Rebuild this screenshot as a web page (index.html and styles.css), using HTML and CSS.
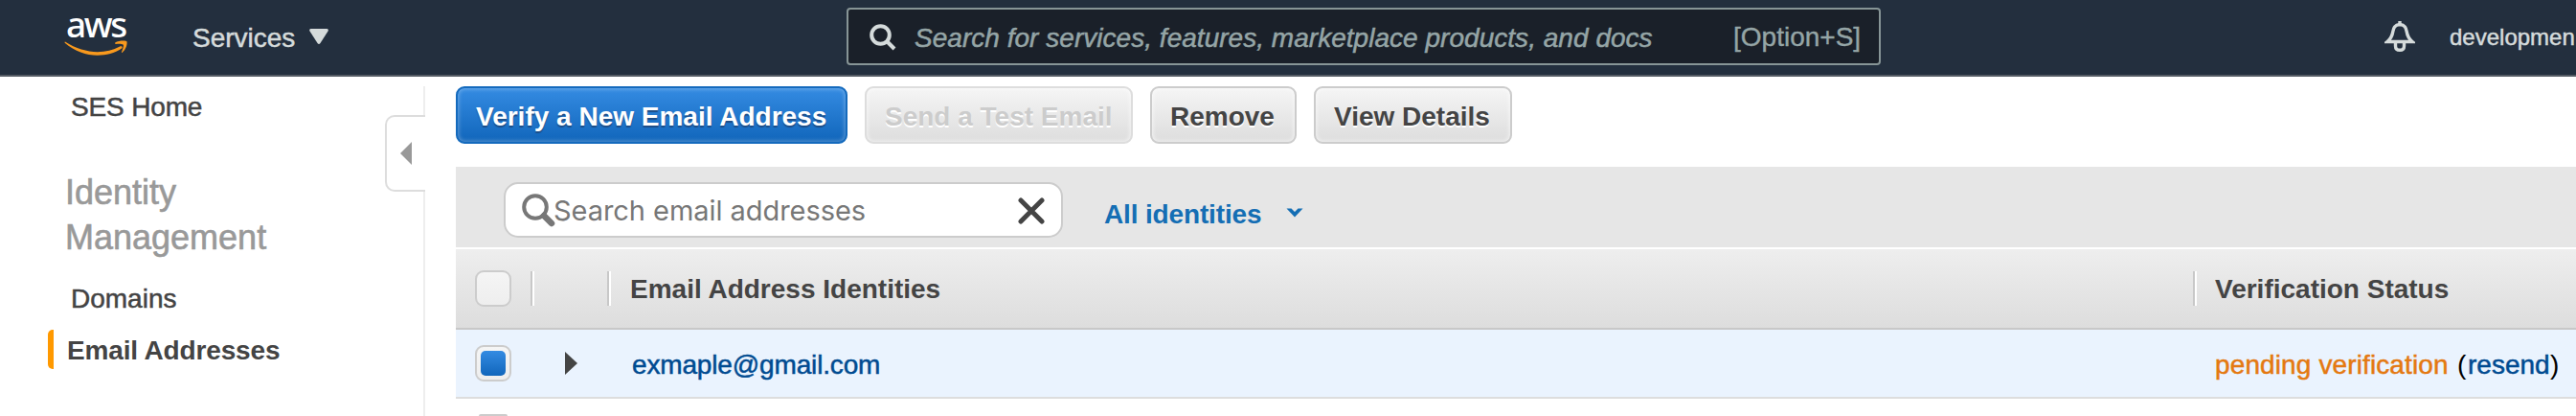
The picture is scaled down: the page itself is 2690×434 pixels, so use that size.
FILE: index.html
```html
<!DOCTYPE html>
<html lang="en">
<head>
<meta charset="utf-8">
<title>SES Management Console</title>
<link rel="stylesheet" href="styles.css">
</head>
<body>
<header class="topbar">
  <div class="logo">
    <span class="logo-text">aws</span>
    <svg class="logo-smile" width="67" height="18" viewBox="0 0 68 18"><path d="M1 1.5C21 14.500 43 15 59 6.500C61 5.500 62.500 7 61 8.500C44 19.500 19 18.500 1 3Q0 1.500 1 1.500Z" fill="#f8991d"/><path d="M54 2.500C58 0 66 0 66.500 1.500C67 4 65.500 10 61.500 13C61 13 60.800 12.500 61 12C62.500 8 63.500 5.500 62.500 4.500C61.500 3.500 58 3.500 54.500 3.800Q53.500 3.500 54 2.500Z" fill="#f8991d"/></svg>
  </div>
  <div class="services">Services</div>
  <svg class="services-caret" width="20" height="17" viewBox="0 0 20 17"><path d="M1.500 0H18.500Q20.500 .5 19.500 2.500L11.500 15Q10 17 8.500 15L.5 2.500Q-.5 .5 1.500 0Z" fill="#d5dbdb"/></svg>
  <div class="global-search">
    <svg class="global-search-icon" width="28" height="28" viewBox="0 0 28 28" fill="none" stroke="#d5dbdb" stroke-width="4"><circle cx="11.500" cy="11.500" r="9.300"/><path d="M18 18L26 26"/></svg>
    <span class="global-search-hint">Search for services, features, marketplace products, and docs</span>
    <span class="global-search-key">[Option+S]</span>
  </div>
  <svg class="bell" width="32" height="32" viewBox="0 0 32 32" fill="none" stroke="#d5dbdb" stroke-width="3.400"><path d="M16 3.500C10.500 4 9.500 7 8.800 11C8.200 15 7 18 3 21.500H29C25 18 23.800 15 23.200 11C22.500 7 21.500 4 16 3.500Z" stroke-linejoin="miter"/><path d="M11.500 22.500V26Q11.500 30.300 16 30.300T20.500 26V22.500M16 0V3"/></svg>
  <div class="account">developmen</div>
</header>
<div class="page">
  <nav class="sidebar">
    <div class="nav-item nav-home">SES Home</div>
    <div class="nav-heading">Identity Management</div>
    <div class="nav-item nav-domains">Domains</div>
    <div class="nav-item nav-current"><span class="nav-marker"></span><span class="nav-current-text">Email Addresses</span></div>
  </nav>
  <div class="divider">
    <div class="divider-line line-top"></div>
    <div class="collapse-tab"><svg width="12" height="24" viewBox="0 0 12 24"><path d="M12 0V24L0 12Z" fill="#999"/></svg></div>
    <div class="divider-line line-rest"></div>
  </div>
  <main class="content">
    <div class="actions">
      <div class="btn btn-primary">Verify a New Email Address</div>
      <div class="btn btn-disabled">Send a Test Email</div>
      <div class="btn btn-remove">Remove</div>
      <div class="btn btn-view">View Details</div>
    </div>
    <div class="filter">
      <div class="field">
        <svg class="field-icon" width="36" height="36" viewBox="0 0 36 36" fill="none" stroke="#777"><circle cx="14" cy="14" r="11.800" stroke-width="4"/><path d="M23 23L31 31" stroke-width="6.500" stroke-linecap="round"/></svg>
        <span class="field-text">Search email addresses</span>
        <svg class="field-clear" width="28" height="28" viewBox="0 0 28 28"><path d="M3 3L25 25M25 3L3 25" stroke="#444" stroke-width="5" stroke-linecap="round"/></svg>
      </div>
      <span class="scope">All identities</span>
      <svg class="scope-caret" width="20" height="12" viewBox="0 0 20 12"><path d="M1.500 1.500H6.500L10 5L13.500 1.500H18.500L10 10.500Z" fill="#146eb4"/></svg>
    </div>
    <div class="row row-head">
      <div class="c-check"><span class="checkbox"></span></div>
      <div class="c-expand sep"></div>
      <div class="c-name sep">Email Address Identities</div>
      <div class="c-status sep">Verification Status</div>
    </div>
    <div class="row row-selected">
      <div class="c-check"><span class="checkbox"><span class="checked"></span></span></div>
      <div class="c-expand"><svg class="expander" width="13" height="24" viewBox="0 0 13 24"><path d="M0 0V24L13 12Z" fill="#444"/></svg></div>
      <div class="c-name"><span class="t-email">exmaple@gmail.com</span></div>
      <div class="c-status"><span class="t-pending">pending verification</span><span class="paren paren-open">(</span><span class="t-resend">resend</span><span class="paren">)</span></div>
    </div>
    <div class="row row-next">
      <div class="c-check"><span class="checkbox-top"></span></div>
    </div>
  </main>
</div>
</body>
</html>
```
FILE: styles.css
```css
* { box-sizing: border-box; }
html, body { margin: 0; height: 434px; overflow: hidden; }
body { width: 2690px; background: #fff; color: #444; font: 28px/32px "Liberation Sans", Arial, sans-serif; white-space: nowrap; }
svg { display: block; flex: none; }

.topbar { display: flex; align-items: flex-start; height: 80px; background: #232f3e; border-bottom: 2px solid #545b64; color: #d5dbdb; overflow: hidden; }
.logo { flex: none; width: 70px; margin-left: 67px; padding-top: 8px; height: 78px; }
.logo-text { display: block; height: 34px; padding-left: 2px; font: 500 37px/34px "Noto Sans", "Open Sans", sans-serif; letter-spacing: -2.4px; color: #fff; }
.services { flex: none; width: 122px; margin: 24px 0 0 64px; -webkit-text-stroke: .5px; }
.services-caret { margin-top: 30px; }
.global-search { flex: none; display: flex; width: 1080px; height: 60px; margin: 8px 0 0 541px; border: 2px solid #879596; border-radius: 4px; background: #1a2029; color: #95a5a6; }
.global-search-icon { margin: 15px 0 0 22px; }
.global-search-hint { width: 855px; margin: 14px 0 0 19px; font-style: italic; -webkit-text-stroke: .5px; letter-spacing: .03px; }
.global-search-key { margin-top: 13px; -webkit-text-stroke: .4px; }
.bell { margin: 22px 0 0 526px; }
.account { margin: 23px 0 0 36px; font-size: 24px; -webkit-text-stroke: .5px; }

.page { display: flex; height: 354px; overflow: hidden; }
.sidebar { width: 402px; flex: none; padding-top: 16px; }
.nav-item { height: 32px; -webkit-text-stroke: .5px; letter-spacing: -.15px; }
.nav-home { padding-left: 74px; }
.nav-heading { width: 330px; margin-top: 49px; padding-left: 68px; font-size: 36px; line-height: 47px; color: #999; white-space: normal; -webkit-text-stroke: .6px; }
.nav-domains { margin-top: 25px; padding-left: 74px; letter-spacing: 0; }
.nav-current { display: flex; height: 41px; margin-top: 16px; padding-left: 50px; font-weight: bold; -webkit-text-stroke: 0; }
.nav-marker { width: 6px; height: 41px; border-radius: 5px 0 0 5px; background: #f90; }
.nav-current-text { margin: 6px 0 0 14px; }

.divider { width: 42px; flex: none; padding-top: 10px; }
.divider-line { width: 2px; margin-left: 40px; background: #eee; }
.line-top { height: 30px; }
.line-rest { height: 234px; }
.collapse-tab { display: flex; align-items: center; height: 80px; padding-left: 14px; border: 2px solid #ddd; border-right: 0; border-radius: 10px 0 0 10px; }

.content { width: 2214px; margin-left: 32px; padding-top: 10px; }
.actions { display: flex; gap: 18px; height: 84px; }
.btn { height: 60px; padding: 14px 0 0 19px; border: 2px solid #ccc; border-radius: 9px; background: linear-gradient(#f5f5f5, #ddd); box-shadow: inset 0 0 4px 1px rgba(255,255,255,.6); font-weight: bold; text-shadow: 0 2px 0 #fff; }
.btn-primary { width: 409px; border-color: #146abd; background: linear-gradient(#348be2, #1166bb); box-shadow: inset 0 0 4px 1px rgba(255,255,255,.3); color: #fff; text-shadow: 0 2px 1px #1d4d87; }
.btn-disabled { width: 280px; border-color: #ddd; color: #ccc; }
.btn-remove { width: 153px; }
.btn-view { width: 207px; }

.filter { display: flex; height: 86px; padding: 16px 0 0 50px; background: #e6e6e6; border-bottom: 2px solid #fff; }
.field { display: flex; width: 584px; height: 58px; border: 2px solid #ccc; border-radius: 15px; background: #fff; color: #777; }
.field-icon { margin: 10px 0 0 17px; }
.field-text { width: 484px; margin: 12px 0 0 -3px; font: 29px/32px Inter, sans-serif; letter-spacing: -.05px; }
.field-clear { margin: 14px 0 0 1px; }
.scope { width: 189px; margin: 18px 0 0 43px; font-weight: bold; letter-spacing: -.15px; color: #146eb4; }
.scope-caret { margin-top: 26px; }

.row { display: flex; }
.row-head { height: 84px; padding-top: 22px; background: linear-gradient(#eee, #ddd); border-bottom: 2px solid #c8c8c8; font-weight: bold; }
.row-selected { height: 72px; padding-top: 16px; background: #eaf3fe; border-bottom: 2px solid #ddd; }
.row-next { height: 18px; padding-top: 16px; }
.c-check { width: 78px; padding-left: 20px; }
.c-expand { width: 80px; padding-left: 35px; }
.c-name { width: 1656px; padding-left: 22px; }
.c-status { display: flex; padding-left: 23px; }
.sep { height: 36px; margin-top: 1px; border-left: 2px solid #c8c8c8; box-shadow: inset 2px 0 #fff; }
.row-head .c-name, .row-head .c-status { line-height: 37px; }
.row-head .c-status { padding-left: 21px; }
.checkbox { display: block; width: 38px; height: 38px; padding: 4px; border: 2px solid #ccc; border-radius: 9px; background: linear-gradient(#f5f5f5, #eee); }
.checkbox-top { display: block; width: 30px; height: 2px; margin-left: 4px; background: #ccc; border-radius: 2px 2px 0 0; }
.checked { display: block; width: 26px; height: 26px; border-radius: 5px; background: linear-gradient(#348be2, #1166bb); }
.expander { margin: 7px 0 0 1px; }
.row-selected .c-name, .row-selected .c-status { padding-top: 5px; }
.row-selected .c-name { padding-left: 26px; color: #004b91; }
.t-email, .t-resend, .t-pending { -webkit-text-stroke: .5px; }
.t-email { letter-spacing: -.15px; }
.t-pending { width: 253px; letter-spacing: .12px; color: #e47911; }
.t-resend { width: 86px; color: #004b91; }
.paren { color: #000; }
.paren-open { width: 11px; }
```
